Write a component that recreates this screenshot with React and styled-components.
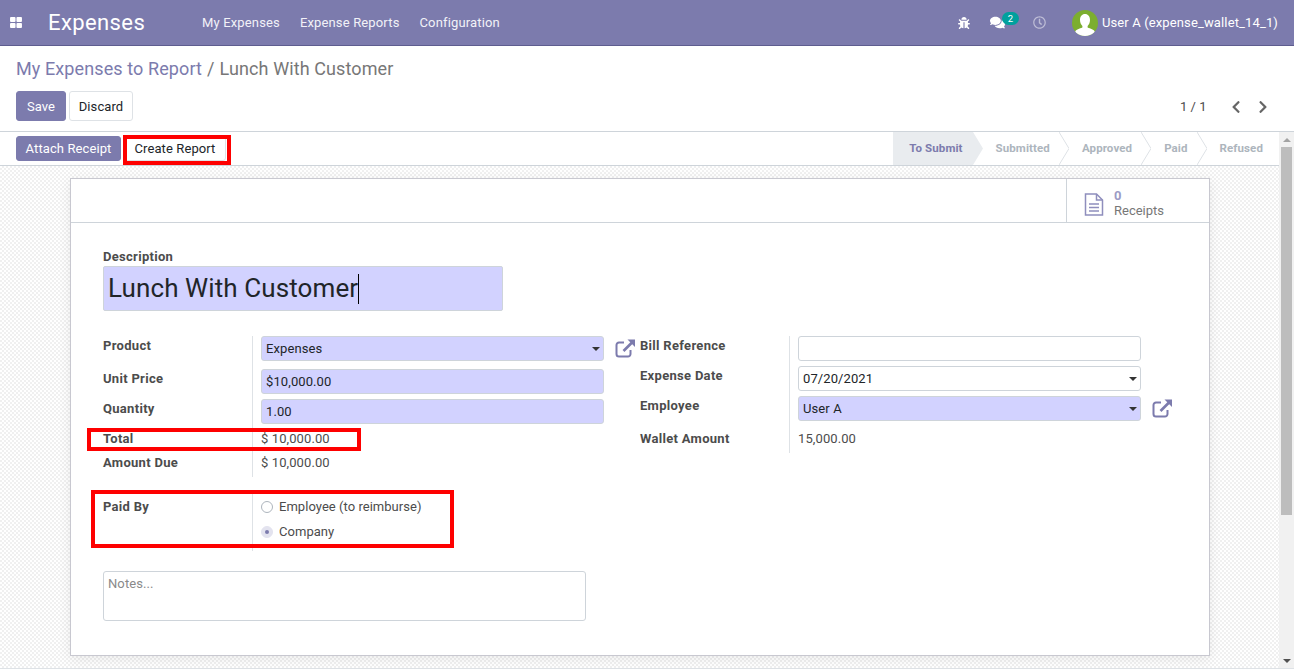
import React from 'react';
import styled, { createGlobalStyle } from 'styled-components';
import { FaBug, FaComments, FaRegClock, FaChevronLeft, FaChevronRight } from 'react-icons/fa';

const GlobalStyle = createGlobalStyle`
  html, body {
    margin: 0;
    padding: 0;
    height: 100%;
    overflow: hidden;
  }
  body {
    font-family: Roboto, "Noto Sans", sans-serif;
    font-size: 13px;
    line-height: 19.5px;
    letter-spacing: 0.1px;
    color: #4c4c4c;
    background: #fff;
  }
  * { box-sizing: border-box; }
`;

const Page = styled.div`
  display: flex;
  flex-direction: column;
  height: 669px;
`;

// barra superior
const Navbar = styled.header`
  display: flex;
  align-items: center;
  height: 46px;
  flex: none;
  background: #7c7bad;
  border-bottom: 1px solid #5e5d8f;
  color: #fff;
  padding-right: 16px;
`;

const AppsIcon = styled.svg`
  width: 12px;
  height: 11px;
  margin-left: 10px;
  margin-right: 26px;
`;

const Brand = styled.div`
  font-size: 22px;
  line-height: 30px;
  letter-spacing: 0.4px;
  width: 154px;
`;

const NavMenu = styled.nav`
  display: flex;
  gap: 20px;
  flex: 1;
  letter-spacing: 0.15px;
  color: #f2f2f8;
`;

const NavTools = styled.div`
  display: flex;
  align-items: center;
  letter-spacing: 0.13px;
`;

const ToolIcon = styled.span`
  display: flex;
  align-items: center;
  position: relative;
  font-size: ${(p) => p.$size || 14}px;
  opacity: ${(p) => p.$dim ? 0.5 : 1};
  margin-right: ${(p) => p.$gap || 0}px;
`;

const Badge = styled.span`
  position: absolute;
  left: 12px;
  top: -3px;
  width: 17px;
  height: 13px;
  border-radius: 7px;
  background: #00a09d;
  color: #fff;
  font-size: 9.5px;
  line-height: 13px;
  text-align: center;
`;

const Avatar = styled.svg`
  width: 26px;
  height: 26px;
  border-radius: 50%;
  margin-right: 4px;
`;

// panel de control
const ControlPanel = styled.div`
  height: 86px;
  flex: none;
  padding: 10px 16px 0;
  border-bottom: 1px solid #ced4da;
`;

const Breadcrumb = styled.div`
  font-size: 18px;
  line-height: 25px;
  color: #777;
  display: flex;
  gap: 5px;
  a { color: #7c7bad; }
`;

const PanelRow = styled.div`
  display: flex;
  align-items: center;
  margin-top: 10px;
`;

const Button = styled.button`
  font: inherit;
  font-size: 13px;
  letter-spacing: inherit;
  width: ${(p) => p.$w}px;
  height: ${(p) => p.$h || 30}px;
  padding: ${(p) => p.$h ? 0 : 2}px 0 0;
  border-radius: 3px;
  border: 1px solid ${(p) => p.$primary ? '#7c7bad' : '#dee2e6'};
  background: ${(p) => p.$primary ? '#7c7bad' : '#fff'};
  color: ${(p) => p.$primary ? '#fff' : '#212529'};
  margin-right: 3px;
`;

const Pager = styled.div`
  margin-left: auto;
  display: flex;
  align-items: center;
  color: #4c4c4c;
  letter-spacing: 0;
  padding: 1px 8px 0 0;
  svg { font-size: 14px; color: #666; margin-left: 13.5px; }
  svg:first-of-type { margin-left: 22px; }
`;

const Body = styled.div`
  flex: 1;
  display: flex;
  min-height: 0;
`;

const Main = styled.div`
  flex: 1;
  display: flex;
  flex-direction: column;
  min-width: 0;
`;

// barra de estado
const StatusBar = styled.div`
  height: 34px;
  flex: none;
  display: flex;
  align-items: center;
  justify-content: space-between;
  padding-left: 16px;
  border-bottom: 1px solid #ced4da;
`;

const StatusActions = styled.div`
  display: flex;
  align-items: center;
`;

const CreateWrap = styled.div`
  position: relative;
`;

const RedBox = styled.div`
  position: absolute;
  border: 4px solid #fe0000;
  top: ${(p) => p.$top}px;
  left: ${(p) => p.$left}px;
  width: ${(p) => p.$w}px;
  height: ${(p) => p.$h}px;
  pointer-events: none;
`;

const Steps = styled.div`
  display: flex;
  height: 33px;
  align-self: flex-start;
`;

const Step = styled.div`
  display: flex;
  align-items: center;
  font-size: 11.5px;
  font-weight: 700;
  padding: 1px ${(p) => p.$current ? 10 : p.$last ? 16 : 9}px 0 ${(p) => p.$current ? 16 : 13}px;
  color: ${(p) => p.$current ? '#7c7bad' : '#adb5bd'};
  background: ${(p) => p.$current ? '#e9ecef' : '#fff'};
`;

const StepArrow = styled.svg`
  width: 10px;
  height: 33px;
  flex: none;
`;

const Content = styled.div`
  flex: 1;
  min-height: 0;
  padding: 12px 69px 11px 70px;
  background-color: #fff;
  background-image: conic-gradient(#f0f0f0 25%, #fff 25% 50%, #f0f0f0 50% 75%, #fff 75%);
  background-size: 4px 4px;
  border-bottom: 1px solid #dee2e6;
`;

const Sheet = styled.div`
  height: 478px;
  background: #fff;
  border: 1px solid #c8c8d0;
  box-shadow: 0 3px 12px rgba(0, 0, 0, 0.08);
`;

const ButtonBox = styled.div`
  display: flex;
  justify-content: flex-end;
  height: 44px;
  border-bottom: 1px solid #ced4da;
`;

const StatButton = styled.div`
  width: 143px;
  display: flex;
  align-items: center;
  padding-left: 17px;
  border-left: 1px solid #ced4da;
`;

const StatIcon = styled.svg`
  width: 20px;
  height: 23px;
  margin: 7px 10px 0 0;
`;

const StatText = styled.div`
  line-height: 15px;
  margin-top: 5px;
  letter-spacing: 0;
  b { display: block; font-weight: 700; color: #9c9bc5; }
  span { color: #777; }
`;

const SheetBody = styled.div`
  padding: 24px 32px 0;
`;

const TopLabel = styled.div`
  font-weight: 700;
  letter-spacing: 0.3px;
  line-height: 19px;
  height: 19px;
`;

const TitleInput = styled.div`
  width: 400px;
  height: 45px;
  background: #d2d2ff;
  border: 1px solid #ced4da;
  border-radius: 2px;
  color: #212529;
  font-size: 26px;
  line-height: 41px;
  padding-left: 4px;
  display: flex;
  align-items: center;
`;

const Caret = styled.span`
  width: 1px;
  height: 30px;
  background: #000;
`;

const Groups = styled.div`
  display: flex;
  margin-top: 25px;
`;

const Group = styled.div`
  position: relative;
  width: 537px;
  display: grid;
  grid-template-columns: 150px 1fr;
  align-content: start;
`;

const Label = styled.div`
  font-weight: 700;
  letter-spacing: 0.3px;
  height: ${(p) => p.$h}px;
  padding-top: ${(p) => p.$pt || 0}px;
  border-right: 1px solid #dee2e6;
`;

const ValueCell = styled.div`
  height: ${(p) => p.$h}px;
  padding-left: 8px;
  display: flex;
  align-items: flex-start;
`;

const Field = styled.div`
  width: 343px;
  height: 25px;
  display: flex;
  align-items: center;
  padding-left: 4px;
  border: 1px solid #ced4da;
  border-radius: 3px;
  background: ${(p) => p.$required ? '#d2d2ff' : '#fff'};
  color: #212529;
`;

const SelectCaret = styled.span`
  margin-left: auto;
  margin-right: 3px;
  border-top: 4px solid #333;
  border-left: 4px solid transparent;
  border-right: 4px solid transparent;
`;

const ExternalLink = styled.svg`
  width: 21px;
  height: 21px;
  margin: 2px 0 0 11px;
`;

const ReadOnly = styled.div`
  color: #4c4c4c;
`;

const PaidGroup = styled(Group)`
  margin-top: 13px;
`;

const RadioRow = styled.div`
  display: flex;
  align-items: center;
  height: 25px;
  letter-spacing: 0.04px;
`;

const RadioList = styled.div`
  padding: 4px 0 0 8px;
`;

const Radio = styled.span`
  width: 12px;
  height: 12px;
  border-radius: 50%;
  margin-right: 6px;
  display: flex;
  align-items: center;
  justify-content: center;
  border: 1px solid ${(p) => p.$checked ? '#e3e3ef' : '#adb5bd'};
  background: ${(p) => p.$checked ? '#e3e3ef' : '#fff'};
  &::after {
    content: '';
    display: ${(p) => p.$checked ? 'block' : 'none'};
    width: 4px;
    height: 4px;
    border-radius: 50%;
    background: #7c7bad;
  }
`;

const Notes = styled.div`
  width: 483px;
  height: 50px;
  margin-top: 20px;
  padding: 2px 4px;
  border: 1px solid #ced4da;
  border-radius: 3px;
  color: #8a8a8a;
`;

// scrollbar dibujada
const ScrollBar = styled.div`
  width: 15px;
  flex: none;
  display: flex;
  flex-direction: column;
  align-items: center;
  background: #f1f1f1;
  border-bottom: 1px solid #dee2e6;
`;

const ScrollArrow = styled.span`
  height: 15px;
  display: flex;
  align-items: center;
  &::after {
    content: '';
    border-left: 4px solid transparent;
    border-right: 4px solid transparent;
    ${(p) => p.$up ? 'border-bottom: 4px solid #a3a3a3;' : 'border-top: 4px solid #505050;'}
  }
`;

const ScrollThumb = styled.div`
  width: 11px;
  height: 368px;
  background: #bdbdbd;
`;

const ScrollSpace = styled.div`
  flex: 1;
`;

const LinkIcon = () => (
  <ExternalLink viewBox="0 0 21 21" fill="none" stroke="#7c7bad" strokeWidth="2">
    <path d="M9 4.5H4a2.5 2.5 0 0 0-2.5 2.5v9A2.5 2.5 0 0 0 4 18.5h9a2.5 2.5 0 0 0 2.5-2.5v-4" />
    <path d="M8.500 13L18 3.500" strokeWidth="2.600" />
    <path d="M12.500 1.500H20V9z" fill="#7c7bad" stroke="none" />
  </ExternalLink>
);

const Arrow = ({ current }) => (
  <StepArrow viewBox="0 0 10 33">
    <path d="M0 0L10 16.500L0 33z" fill={current ? '#e9ecef' : '#fff'} />
    {!current && <path d="M0 0L10 16.500L0 33" fill="none" stroke="#dee2e6" />}
  </StepArrow>
);

const steps = ['Submitted', 'Approved', 'Paid', 'Refused'];

export default function App() {
  return (
    <Page>
      <GlobalStyle />
      <Navbar>
        <AppsIcon viewBox="0 0 13 12" fill="#fff">
          <rect x="0" y="0" width="6" height="5.400" rx="1" />
          <rect x="7" y="0" width="6" height="5.400" rx="1" />
          <rect x="0" y="6.600" width="6" height="5.400" rx="1" />
          <rect x="7" y="6.600" width="6" height="5.400" rx="1" />
        </AppsIcon>
        <Brand>Expenses</Brand>
        <NavMenu>
          <span>My Expenses</span>
          <span>Expense Reports</span>
          <span>Configuration</span>
        </NavMenu>
        <NavTools>
          <ToolIcon $size={12} $gap={20}><FaBug /></ToolIcon>
          <ToolIcon $size={15} $gap={28}><FaComments /><Badge>2</Badge></ToolIcon>
          <ToolIcon $size={13} $gap={26} $dim><FaRegClock /></ToolIcon>
          <Avatar viewBox="0 0 26 26">
            <rect width="26" height="26" fill="#7cae2f" />
            <path d="M13 4c3 0 5 2.400 5 6 0 2.600-1 4.600-2.400 6v1.600c2.800 1 6.400 2 7.400 4.400v4H3v-4c1-2.400 4.600-3.400 7.400-4.400V16C9 14.600 8 12.600 8 10c0-3.600 2-6 5-6z" fill="#fff" />
          </Avatar>
          <span>User A (expense_wallet_14_1)</span>
        </NavTools>
      </Navbar>

      <ControlPanel>
        <Breadcrumb>
          <a>My Expenses to Report</a>
          <span>/</span>
          <span>Lunch With Customer</span>
        </Breadcrumb>
        <PanelRow>
          <Button $primary $w={50}>Save</Button>
          <Button $w={64}>Discard</Button>
          <Pager>
            1 / 1
            <FaChevronLeft />
            <FaChevronRight />
          </Pager>
        </PanelRow>
      </ControlPanel>

      <Body>
        <Main>
          <StatusBar>
            <StatusActions>
              <Button $primary $h={25} $w={105}>Attach Receipt</Button>
              <CreateWrap>
                <Button $h={25} $w={102}>Create Report</Button>
                <RedBox $top={-1} $left={-1} $w={108} $h={30} />
              </CreateWrap>
            </StatusActions>
            <Steps>
              <Step $current>To Submit</Step>
              <Arrow current />
              {steps.map((s, i) => (
                <React.Fragment key={s}>
                  <Step $last={i === steps.length - 1}>{s}</Step>
                  {i < steps.length - 1 && <Arrow />}
                </React.Fragment>
              ))}
            </Steps>
          </StatusBar>

          <Content>
            <Sheet>
              <ButtonBox>
                <StatButton>
                  <StatIcon viewBox="0 0 20 23" fill="none" stroke="#8f8ebd" strokeWidth="1.500">
                    <path d="M1.500 1h11L18.500 7v15h-17z" />
                    <path d="M12.500 1v6h6" />
                    <path d="M5 11h10M5 14.500h10M5 18h10" />
                  </StatIcon>
                  <StatText>
                    <b>0</b>
                    <span>Receipts</span>
                  </StatText>
                </StatButton>
              </ButtonBox>
              <SheetBody>
                <TopLabel>Description</TopLabel>
                <TitleInput>Lunch With Customer<Caret /></TitleInput>

                <Groups>
                  <Group>
                    <Label $h={33}>Product</Label>
                    <ValueCell $h={33}>
                      <Field $required>Expenses<SelectCaret /></Field>
                      <LinkIcon />
                    </ValueCell>
                    <Label $h={30}>Unit Price</Label>
                    <ValueCell $h={30}><Field $required>$10,000.00</Field></ValueCell>
                    <Label $h={30}>Quantity</Label>
                    <ValueCell $h={30}><Field $required>1.00</Field></ValueCell>
                    <Label $h={24}>Total</Label>
                    <ValueCell $h={24}><ReadOnly>$ 10,000.00</ReadOnly></ValueCell>
                    <Label $h={24}>Amount Due</Label>
                    <ValueCell $h={24}><ReadOnly>$ 10,000.00</ReadOnly></ValueCell>
                    <RedBox $top={92} $left={-16} $w={274} $h={23} />
                  </Group>
                  <Group>
                    <Label $h={30}>Bill Reference</Label>
                    <ValueCell $h={30}><Field /></ValueCell>
                    <Label $h={30}>Expense Date</Label>
                    <ValueCell $h={30}><Field>07/20/2021<SelectCaret /></Field></ValueCell>
                    <Label $h={33}>Employee</Label>
                    <ValueCell $h={33}>
                      <Field $required>User A<SelectCaret /></Field>
                      <LinkIcon />
                    </ValueCell>
                    <Label $h={24}>Wallet Amount</Label>
                    <ValueCell $h={24}><ReadOnly>15,000.00</ReadOnly></ValueCell>
                  </Group>
                </Groups>

                <PaidGroup>
                  <Label $h={61} $pt={7}>Paid By</Label>
                  <RadioList>
                    <RadioRow><Radio />Employee (to reimburse)</RadioRow>
                    <RadioRow><Radio $checked />Company</RadioRow>
                  </RadioList>
                  <RedBox $top={0} $left={-12} $w={363} $h={58} />
                </PaidGroup>

                <Notes>Notes...</Notes>
              </SheetBody>
            </Sheet>
          </Content>
        </Main>

        <ScrollBar>
          <ScrollArrow $up />
          <ScrollThumb />
          <ScrollSpace />
          <ScrollArrow />
        </ScrollBar>
      </Body>
    </Page>
  );
}
